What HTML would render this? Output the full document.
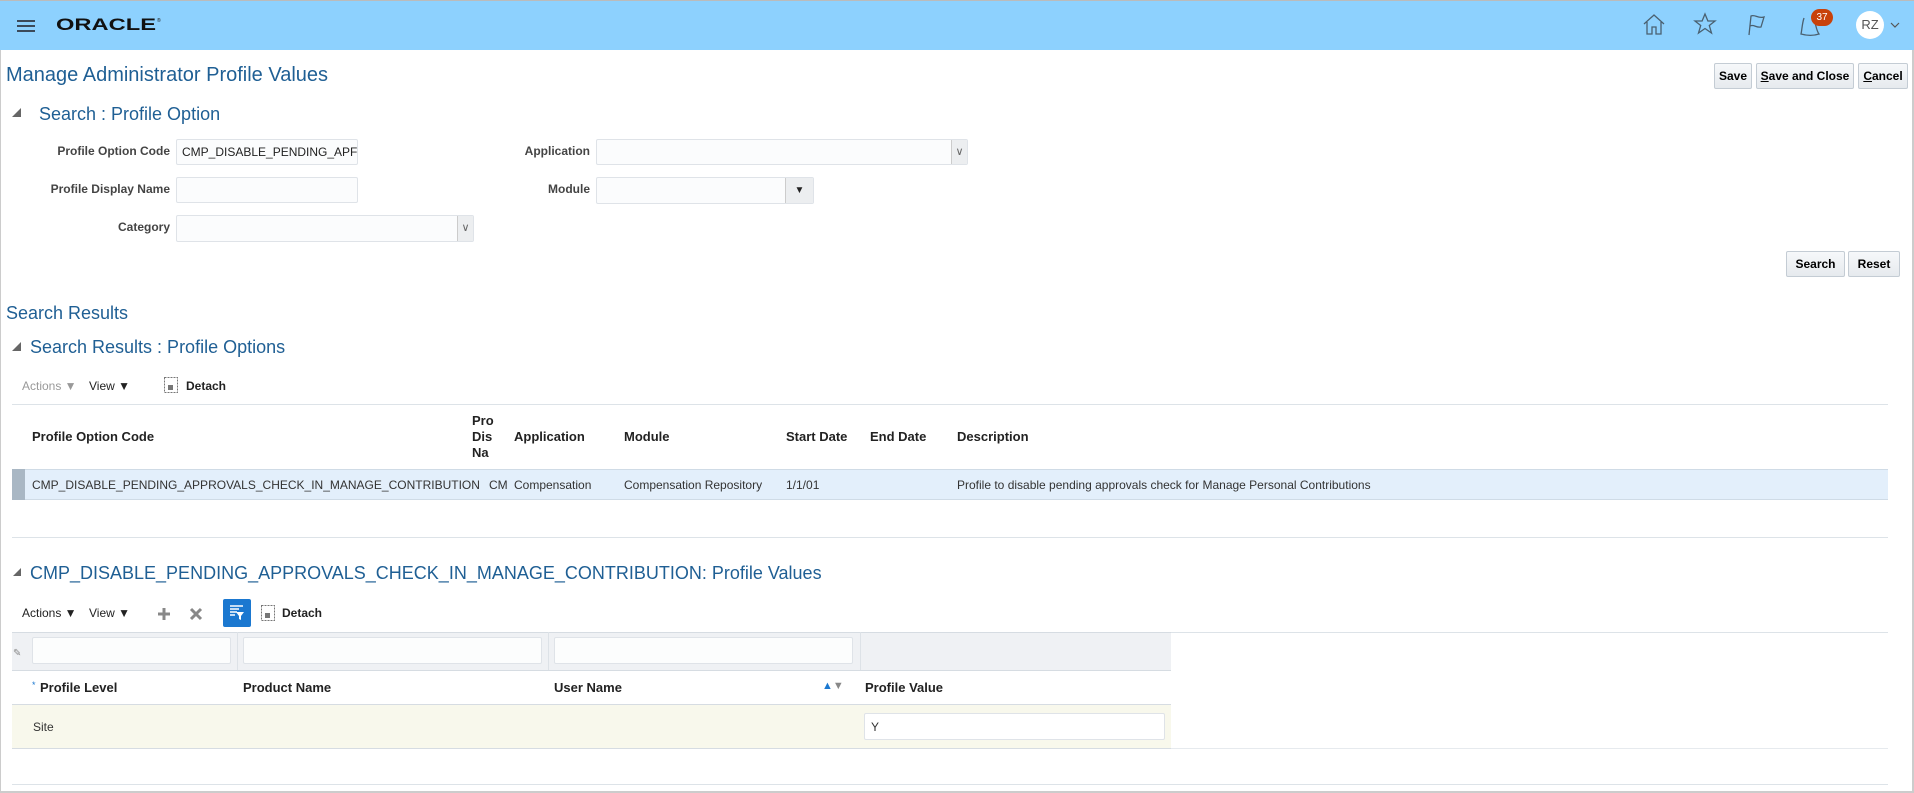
<!DOCTYPE html>
<html><head><meta charset="utf-8"><style>
*{margin:0;padding:0;box-sizing:border-box}
body{width:1914px;height:793px;overflow:hidden;background:#fff;font-family:"Liberation Sans",Arial,sans-serif;position:relative;color:#333}
.a{position:absolute;white-space:nowrap}
.hdr{left:0;top:0;width:1914px;height:50px;background:#8dd1fe;border-top:1px solid #bbb}
.blue{color:#1f5f94}
.btn{position:absolute;height:26px;border:1px solid #c4ccd4;border-radius:2px;background:linear-gradient(#f6f8fa,#e6eaee);font-weight:bold;font-size:12px;color:#000;text-align:center;line-height:24px;white-space:nowrap}
.lbl{font-size:12px;font-weight:bold;color:#444;text-align:right}
.inp{position:absolute;border:1px solid #dfe3e8;background:#fbfcfd;border-radius:2px}
.th{font-size:13px;font-weight:bold;color:#222}
.td{font-size:12px;color:#333}
.hl{position:absolute;height:1px;background:#dde3e8}
</style></head><body>
<div class="a hdr"></div>
<div class="a" style="left:1912px;top:50px;width:2px;height:743px;background:#ccc"></div>
<div class="a" style="left:0;top:50px;width:1px;height:743px;background:#ccc"></div>
<div class="a" style="left:0;top:791px;width:1914px;height:2px;background:#ccc"></div>
<svg class="a" style="left:17px;top:20px" width="19" height="12"><path d="M0 1H18M0 6H18M0 11H18" stroke="#3b4a5a" stroke-width="2"/></svg>
<svg class="a" style="left:55px;top:16px" width="108" height="18"><text x="1" y="14" font-family="Liberation Sans" font-size="17" font-weight="bold" textLength="100" lengthAdjust="spacingAndGlyphs" fill="#111">ORACLE</text><text x="102" y="6" font-size="5" fill="#111">®</text></svg>
<!-- header icons -->
<svg class="a" style="left:1642px;top:13px" width="24" height="22"><path d="M2 11L12 2L22 11M5 9V21H10V14H14V21H19V9" fill="none" stroke="#4a6070" stroke-width="1.3"/></svg>
<svg class="a" style="left:1693px;top:12px" width="24" height="24"><path d="M12 2L14.9 9H22L16.3 13.5L18.5 21L12 16.5L5.5 21L7.7 13.5L2 9H9.1Z" fill="none" stroke="#4a6070" stroke-width="1.3"/></svg>
<svg class="a" style="left:1746px;top:13px" width="22" height="24"><path d="M3 22L5 3C9 1 12 6 18 4L15 14C10 15 8 11 4 13" fill="none" stroke="#4a6070" stroke-width="1.3"/></svg>
<svg class="a" style="left:1798px;top:14px" width="24" height="24"><path d="M6 4C4 10 4 16 3 20C10 22 15 22 21 20C18 16 18 10 16 6" fill="none" stroke="#4a6070" stroke-width="1.3"/></svg>
<div class="a" style="left:1811px;top:9px;width:22px;height:17px;border-radius:9px;background:#c8420b;color:#fff;font-size:10px;text-align:center;line-height:17px">37</div>
<div class="a" style="left:1856px;top:11px;width:28px;height:28px;border-radius:50%;background:#fff;color:#555;font-size:13px;text-align:center;line-height:28px">RZ</div>
<svg class="a" style="left:1890px;top:22px" width="10" height="7"><path d="M1 1L5 5L9 1" fill="none" stroke="#555" stroke-width="1.2"/></svg>

<div class="a blue" style="left:6px;top:64px;font-size:20px">Manage Administrator Profile Values</div>
<div class="btn" style="left:1714px;top:63px;width:38px">Save</div>
<div class="btn" style="left:1756px;top:63px;width:98px"><u>S</u>ave and Close</div>
<div class="btn" style="left:1858px;top:63px;width:50px"><u>C</u>ancel</div>

<svg class="a" style="left:12px;top:108px" width="10" height="10"><path d="M9 0V9H0Z" fill="#666"/></svg>
<div class="a blue" style="left:39px;top:104px;font-size:18px">Search : Profile Option</div>

<div class="a lbl" style="left:0;top:144px;width:170px">Profile Option Code</div>
<div class="inp" style="left:176px;top:139px;width:182px;height:26px"></div>
<div class="a td" style="left:182px;top:145px;color:#222">CMP_DISABLE_PENDING_APF</div>
<div class="a lbl" style="left:0;top:182px;width:170px">Profile Display Name</div>
<div class="inp" style="left:176px;top:177px;width:182px;height:26px"></div>
<div class="a lbl" style="left:0;top:220px;width:170px">Category</div>
<div class="inp" style="left:176px;top:215px;width:298px;height:27px"></div>
<div class="a" style="left:457px;top:216px;width:16px;height:25px;border-left:1px solid #ccc;background:#eceef0;color:#666;font-size:11px;text-align:center;line-height:24px">&#8744;</div>
<div class="a lbl" style="left:420px;top:144px;width:170px">Application</div>
<div class="inp" style="left:596px;top:139px;width:372px;height:26px"></div>
<div class="a" style="left:951px;top:140px;width:16px;height:24px;border-left:1px solid #ccc;background:#eceef0;color:#666;font-size:11px;text-align:center;line-height:24px">&#8744;</div>
<div class="a lbl" style="left:420px;top:182px;width:170px">Module</div>
<div class="inp" style="left:596px;top:177px;width:218px;height:27px"></div>
<div class="a" style="left:785px;top:178px;width:28px;height:25px;border-left:1px solid #ccc;background:#eceef0;color:#222;font-size:10px;text-align:center;line-height:25px">&#9660;</div>

<div class="btn" style="left:1786px;top:251px;width:59px">Search</div>
<div class="btn" style="left:1848px;top:251px;width:52px">Reset</div>

<div class="a blue" style="left:6px;top:303px;font-size:18px">Search Results</div>
<svg class="a" style="left:12px;top:342px" width="10" height="10"><path d="M9 0V9H0Z" fill="#666"/></svg>
<div class="a blue" style="left:30px;top:337px;font-size:18px">Search Results : Profile Options</div>

<div class="a" style="left:22px;top:379px;font-size:12px;color:#999">Actions &#9660;</div>
<div class="a" style="left:89px;top:379px;font-size:12px;color:#222">View &#9660;</div>
<svg class="a" style="left:164px;top:377px" width="14" height="16"><rect x="0.5" y="0.5" width="13" height="15" fill="none" stroke="#777" stroke-dasharray="2 1"/><rect x="4" y="8" width="5" height="5" fill="#777"/></svg>
<div class="a" style="left:186px;top:379px;font-size:12px;font-weight:bold;color:#222">Detach</div>

<div class="hl" style="left:12px;top:404px;width:1876px"></div>
<div class="a th" style="left:32px;top:429px">Profile Option Code</div>
<div class="a th" style="left:472px;top:413px;line-height:16px;width:40px;overflow:hidden">Pro<br>Dis<br>Na</div>
<div class="a th" style="left:514px;top:429px">Application</div>
<div class="a th" style="left:624px;top:429px">Module</div>
<div class="a th" style="left:786px;top:429px">Start Date</div>
<div class="a th" style="left:870px;top:429px">End Date</div>
<div class="a th" style="left:957px;top:429px">Description</div>
<div class="a" style="left:12px;top:469px;width:1876px;height:31px;background:#e3effb;border-top:1px solid #cfdbe6;border-bottom:1px solid #cfdbe6"></div>
<div class="a" style="left:12px;top:469px;width:13px;height:31px;background:#a9b7c4"></div>
<div class="a td" style="left:32px;top:478px">CMP_DISABLE_PENDING_APPROVALS_CHECK_IN_MANAGE_CONTRIBUTION</div>
<div class="a td" style="left:489px;top:478px">CM</div>
<div class="a td" style="left:514px;top:478px">Compensation</div>
<div class="a td" style="left:624px;top:478px">Compensation Repository</div>
<div class="a td" style="left:786px;top:478px">1/1/01</div>
<div class="a td" style="left:957px;top:478px">Profile to disable pending approvals check for Manage Personal Contributions</div>
<div class="hl" style="left:12px;top:537px;width:1876px"></div>

<svg class="a" style="left:13px;top:568px" width="9" height="9"><path d="M8 0V8H0Z" fill="#666"/></svg>
<div class="a blue" style="left:30px;top:563px;font-size:18px">CMP_DISABLE_PENDING_APPROVALS_CHECK_IN_MANAGE_CONTRIBUTION: Profile Values</div>

<div class="a" style="left:22px;top:606px;font-size:12px;color:#222">Actions &#9660;</div>
<div class="a" style="left:89px;top:606px;font-size:12px;color:#222">View &#9660;</div>
<svg class="a" style="left:157px;top:607px" width="14" height="14"><path d="M7 1V13M1 7H13" stroke="#888" stroke-width="3"/></svg>
<svg class="a" style="left:189px;top:607px" width="14" height="14"><path d="M2 2L12 12M12 2L2 12" stroke="#888" stroke-width="3"/></svg>
<div class="a" style="left:223px;top:599px;width:28px;height:28px;background:#1b78d0;border-radius:2px"></div>
<svg class="a" style="left:229px;top:605px" width="16" height="16"><path d="M1 1H14M1 4H10M1 7H8M1 10H6" stroke="#fff" stroke-width="1.5"/><path d="M7 7H15L12 11V15L10 14V11Z" fill="#fff"/></svg>
<svg class="a" style="left:261px;top:605px" width="14" height="16"><rect x="0.5" y="0.5" width="13" height="15" fill="none" stroke="#777" stroke-dasharray="2 1"/><rect x="4" y="8" width="5" height="5" fill="#777"/></svg>
<div class="a" style="left:282px;top:606px;font-size:12px;font-weight:bold;color:#222">Detach</div>

<div class="a" style="left:12px;top:632px;width:1159px;height:38px;background:#eff1f4;border-top:1px solid #d6dce2"></div>
<div class="hl" style="left:1171px;top:632px;width:717px"></div>
<div class="a" style="left:13px;top:648px;font-size:10px;color:#888">&#9998;</div>
<div class="inp" style="left:32px;top:637px;width:199px;height:27px;background:#fcfdfd"></div>
<div class="inp" style="left:243px;top:637px;width:299px;height:27px;background:#fcfdfd"></div>
<div class="inp" style="left:554px;top:637px;width:299px;height:27px;background:#fcfdfd"></div>
<div class="a" style="left:237px;top:632px;width:1px;height:38px;background:#dde2e7"></div>
<div class="a" style="left:548px;top:632px;width:1px;height:38px;background:#dde2e7"></div>
<div class="a" style="left:860px;top:632px;width:1px;height:38px;background:#dde2e7"></div>
<div class="a" style="left:12px;top:670px;width:1159px;height:1px;background:#d6dce2"></div>
<div class="a" style="left:32px;top:680px;font-size:9px;color:#1b78d0">*</div>
<div class="a th" style="left:40px;top:680px">Profile Level</div>
<div class="a th" style="left:243px;top:680px">Product Name</div>
<div class="a th" style="left:554px;top:680px">User Name</div>
<div class="a" style="left:822px;top:680px;font-size:11px;color:#1b78d0">&#9650;<span style="color:#888">&#9660;</span></div>
<div class="a th" style="left:865px;top:680px">Profile Value</div>
<div class="a" style="left:12px;top:704px;width:1159px;height:45px;background:#f8f8ec;border-top:1px solid #d6dce2;border-bottom:1px solid #d6dce2"></div>
<div class="a td" style="left:33px;top:720px">Site</div>
<div class="inp" style="left:864px;top:713px;width:301px;height:27px;background:#fff"></div>
<div class="a td" style="left:871px;top:720px">Y</div>
<div class="hl" style="left:1171px;top:748px;width:717px;background:#e6eaee"></div>
<div class="hl" style="left:12px;top:784px;width:1876px"></div>
</body></html>
